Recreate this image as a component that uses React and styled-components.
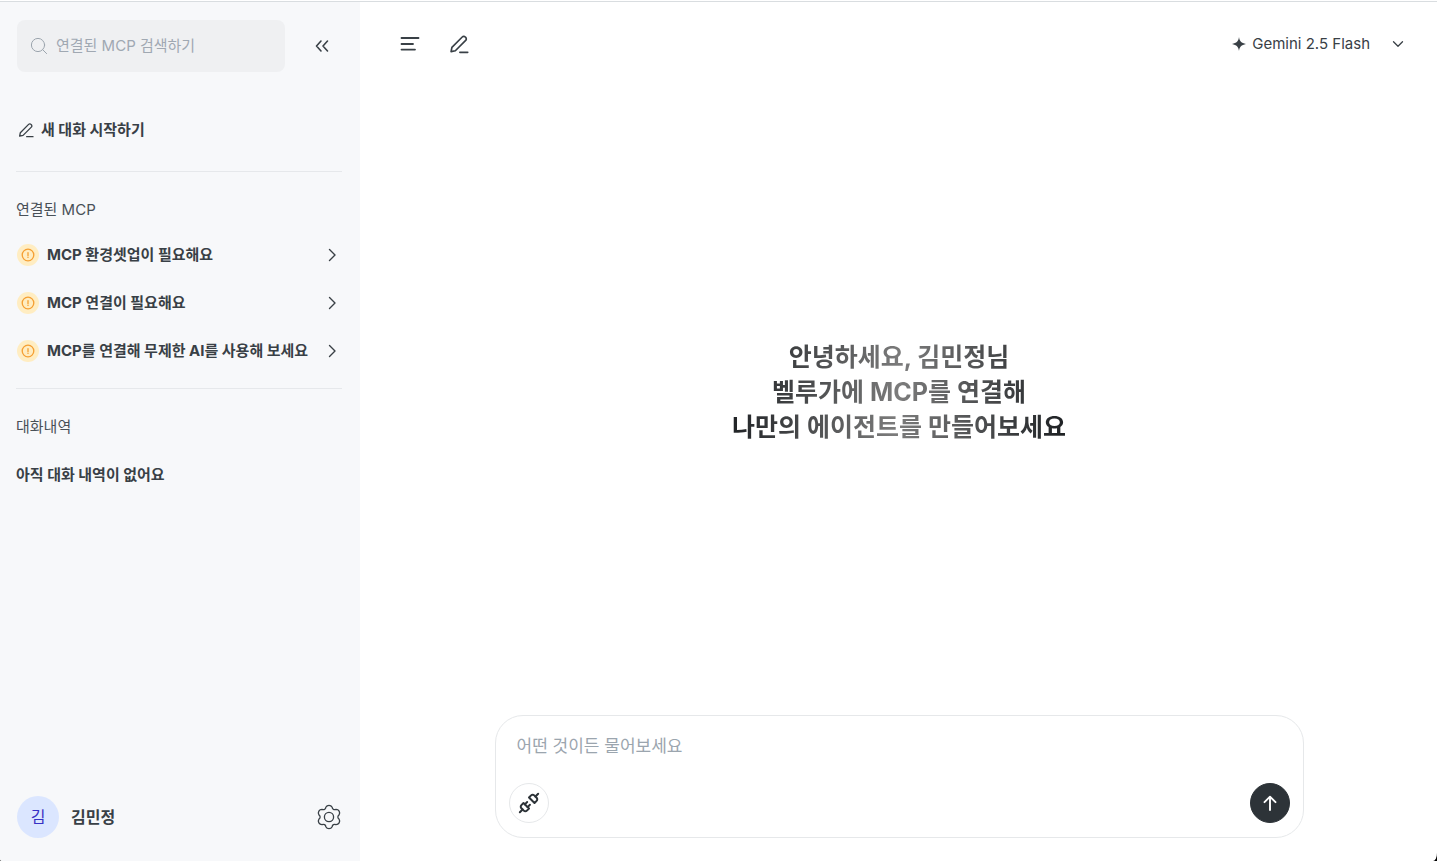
import React from 'react';
import styled, { createGlobalStyle } from 'styled-components';

const notices = [
  'MCP 환경셋업이 필요해요',
  'MCP 연결이 필요해요',
  'MCP를 연결해 무제한 AI를 사용해 보세요',
];

const PenIcon = ({ size = 24, weight = 2 }) => (
  <Icon viewBox="0 0 24 24" $size={size} $weight={weight}>
    <path d="M2.500 21.200l1-5.200L15.900 3.600a2.500 2.500 0 0 1 3.600 0l.5.5a2.500 2.500 0 0 1 0 3.600L7.600 20.100z" />
    <path d="M13 22h9.500" />
  </Icon>
);

const SearchIcon = () => (
  <Icon viewBox="0 0 18 18" $size={18} $weight={1}>
    <circle cx="8" cy="8" r="6.600" />
    <path d="M12.800 12.800L16.600 16.600" />
  </Icon>
);

const CollapseIcon = () => (
  <Icon viewBox="0 0 16 16" $size={16} $weight={1.6}>
    <path d="M7 3L2.500 8 7 13M13.500 3L9 8l4.500 5" />
  </Icon>
);

const ChevronRight = () => (
  <Icon viewBox="0 0 16 16" $size={16} $weight={1.4}>
    <path d="M5.500 2.500L11 8l-5.500 5.500" />
  </Icon>
);

const ChevronDown = () => (
  <Icon viewBox="0 0 16 16" $size={16} $weight={1.3}>
    <path d="M3.500 5.800L8 10.300l4.500-4.500" />
  </Icon>
);

const NoticeIcon = () => (
  <Icon viewBox="0 0 22 22" $size={22} $weight={1.3}>
    <circle cx="11" cy="11" r="11" fill="#ffedc2" stroke="none" />
    <circle cx="11" cy="11" r="5.800" />
    <path d="M11 8.600v3.200M11 13.300v.1" />
  </Icon>
);

const GearIcon = () => (
  <Icon viewBox="0 0 26 26" $size={26} $weight={1.3}>
    <path d="M9.820 3.200A3.600 3.600 0 0 1 16.180 3.200A2.500 2.500 0 0 0 19.890 5.350A3.600 3.600 0 0 1 23.070 10.860A2.500 2.500 0 0 0 23.070 15.140A3.600 3.600 0 0 1 19.890 20.650A2.500 2.500 0 0 0 16.180 22.800A3.600 3.600 0 0 1 9.820 22.800A2.500 2.500 0 0 0 6.110 20.650A3.600 3.600 0 0 1 2.930 15.140A2.500 2.500 0 0 0 2.930 10.860A3.600 3.600 0 0 1 6.110 5.350A2.500 2.500 0 0 0 9.820 3.200Z" />
    <circle cx="13" cy="13" r="4.600" />
  </Icon>
);

const MenuIcon = () => (
  <Icon viewBox="0 0 20 20" $size={20} $weight={1.8}>
    <path d="M1.500 4h17M1.500 10h11.500M1.500 15.600h13.500" />
  </Icon>
);

const SparkIcon = () => (
  <Icon viewBox="0 0 14 14" $size={14} $weight={0}>
    <path
      d="M7 0c.6 4.100 2.300 6 7 7-4.700 1-6.400 2.900-7 7-.6-4.100-2.300-6-7-7 4.700-1 6.400-2.900 7-7z"
      fill="currentColor"
      stroke="none"
    />
  </Icon>
);

const PlugIcon = () => (
  <Icon viewBox="0 0 24 24" $size={22} $weight={2.2}>
    <path d="m19 5 3-3M2 22l3-3M7.500 13.500 10 11M10.500 16.500 13 14" />
    <path d="M6.300 20.300a2.400 2.400 0 0 0 3.400 0L12 18l-6-6-2.300 2.300a2.400 2.400 0 0 0 0 3.400Z" />
    <path d="m12 6 6 6 2.300-2.300a2.400 2.400 0 0 0 0-3.400l-2.600-2.600a2.400 2.400 0 0 0-3.400 0Z" />
  </Icon>
);

const ArrowUpIcon = () => (
  <Icon viewBox="0 0 18 18" $size={18} $weight={1.9}>
    <path d="M9 16V3M3.500 8.200L9 2.700l5.500 5.500" />
  </Icon>
);

export default function App() {
  return (
    <>
      <GlobalStyle />
      <Page>
        <Sidebar>
          <SearchRow>
            <SearchBox>
              <SearchIcon />
              <SearchInput type="search" placeholder="연결된 MCP 검색하기" aria-label="연결된 MCP 검색하기" />
            </SearchBox>
            <IconButton type="button" aria-label="사이드바 접기">
              <CollapseIcon />
            </IconButton>
          </SearchRow>

          <NewChat type="button">
            <PenIcon size={16} />
            새 대화 시작하기
          </NewChat>

          <Section>
            <SectionTitle>연결된 MCP</SectionTitle>
            <NoticeList>
              {notices.map((text) => (
                <li key={text}>
                  <NoticeButton type="button">
                    <NoticeMark>
                      <NoticeIcon />
                    </NoticeMark>
                    <NoticeText>{text}</NoticeText>
                    <ChevronRight />
                  </NoticeButton>
                </li>
              ))}
            </NoticeList>
          </Section>

          <Section>
            <SectionTitle>대화내역</SectionTitle>
            <Empty>아직 대화 내역이 없어요</Empty>
          </Section>

          <Profile>
            <Avatar>김</Avatar>
            <ProfileName>김민정</ProfileName>
            <IconButton type="button" aria-label="설정">
              <GearIcon />
            </IconButton>
          </Profile>
        </Sidebar>

        <Main>
          <Header>
            <HeaderTools>
              <IconButton type="button" aria-label="메뉴">
                <MenuIcon />
              </IconButton>
              <IconButton type="button" aria-label="새 대화">
                <PenIcon size={20} />
              </IconButton>
            </HeaderTools>
            <ModelButton type="button">
              <SparkIcon />
              <ModelName>Gemini 2.5 Flash</ModelName>
              <ChevronDown />
            </ModelButton>
          </Header>

          <Welcome>
            <Greeting>
              안녕하세요, 김민정님
              <br />
              벨루가에 MCP를 연결해
              <br />
              나만의 에이전트를 만들어보세요
            </Greeting>
          </Welcome>

          <Composer onSubmit={(e) => e.preventDefault()}>
            <Prompt rows={1} placeholder="어떤 것이든 물어보세요" aria-label="메시지" />
            <ComposerActions>
              <RoundButton type="button" aria-label="MCP 연결">
                <PlugIcon />
              </RoundButton>
              <RoundButton type="submit" $dark aria-label="보내기">
                <ArrowUpIcon />
              </RoundButton>
            </ComposerActions>
          </Composer>
        </Main>
      </Page>
    </>
  );
}

const GlobalStyle = createGlobalStyle`
  * {
    box-sizing: border-box;
  }

  html {
    background: #000;
  }

  body {
    margin: 0;
    color: #394046;
    font-family: Inter, "Noto Sans CJK KR", sans-serif;
    font-size: 15px;
    line-height: 24px;
  }

  button, input, textarea {
    font: inherit;
    color: inherit;
    padding: 0;
    border: 0;
    background: none;
  }

  button {
    cursor: pointer;
  }
`;

const Icon = styled.svg.attrs({ 'aria-hidden': true })`
  display: block;
  flex: none;
  width: ${(p) => p.$size}px;
  height: ${(p) => p.$size}px;
  fill: none;
  stroke: currentColor;
  stroke-width: ${(p) => p.$weight};
  stroke-linecap: round;
  stroke-linejoin: round;
`;

const Page = styled.div`
  display: flex;
  min-height: 100vh;
  padding-top: 1px;
  background: #fff;
  border-radius: 0 0 4px 2px / 0 0 8px 2px;
  overflow: hidden;
`;

const Sidebar = styled.aside`
  display: flex;
  flex-direction: column;
  flex: none;
  width: 360px;
  padding: 18px 18px 23px 16px;
  background: #f7f8fa;
  border-top: 1px solid #d9dde0;
`;

const SearchRow = styled.div`
  display: flex;
  align-items: center;
  gap: 29px;
  padding-left: 1px;
`;

const SearchBox = styled.label`
  display: flex;
  align-items: center;
  gap: 8px;
  width: 268px;
  height: 52px;
  padding: 0 13px;
  border-radius: 8px;
  background: #eff0f2;
  color: #9ca5ae;
`;

const SearchInput = styled.input`
  flex: 1;
  min-width: 0;
  outline: none;

  &::placeholder {
    color: #a0a8b2;
    opacity: 1;
  }
`;

const IconButton = styled.button`
  display: flex;
  align-items: center;
  justify-content: center;
`;

const NewChat = styled.button`
  display: flex;
  align-items: center;
  gap: 7px;
  margin: 46px 0 29px;
  padding-left: 2px;
  font-weight: 700;
`;

const Section = styled.section`
  padding: 26px 0 13px;
  border-top: 1px solid #e6e8eb;
`;

const SectionTitle = styled.h2`
  margin: 0;
  font-size: 15px;
  font-weight: 400;
  color: #495057;
`;

const NoticeList = styled.ul`
  margin: 9px 0 0;
  padding: 0;
  list-style: none;
`;

const NoticeButton = styled.button`
  display: flex;
  align-items: center;
  width: 100%;
  height: 48px;
  padding: 0 2px 0 1px;
  text-align: left;
`;

const NoticeMark = styled.span`
  color: #f59f32;
`;

const NoticeText = styled.span`
  flex: 1;
  margin-left: 8px;
  font-weight: 700;
  white-space: nowrap;
`;

const Empty = styled.p`
  margin: 24px 0 0;
  font-weight: 700;
`;

const Profile = styled.div`
  display: flex;
  align-items: center;
  gap: 12px;
  margin-top: auto;
  padding-left: 1px;

  button {
    margin-left: auto;
  }
`;

const Avatar = styled.span`
  display: flex;
  align-items: center;
  justify-content: center;
  width: 42px;
  height: 42px;
  border-radius: 50%;
  background: #dbe6ff;
  color: #3730c4;
  font-size: 16px;
`;

const ProfileName = styled.span`
  font-size: 16px;
  font-weight: 700;
`;

const Main = styled.main`
  display: flex;
  flex-direction: column;
  flex: 1;
  min-width: 0;
  padding: 0 31px 23px 32px;
  border-top: 1px solid #d9dde0;
`;

const Header = styled.header`
  display: flex;
  align-items: center;
  justify-content: space-between;
  height: 84px;
  padding-left: 8px;
`;

const HeaderTools = styled.div`
  display: flex;
  gap: 29px;
`;

const ModelButton = styled.button`
  display: flex;
  align-items: center;
  gap: 6px;
`;

const ModelName = styled.span`
  margin-right: 14px;
`;

const Welcome = styled.div`
  display: flex;
  flex: 1;
  align-items: center;
  justify-content: center;
  padding-bottom: 16px;
`;

const Greeting = styled.h1`
  margin: 0;
  background: linear-gradient(95deg, #1c1f22 0%, #7c7c7c 50%, #1c1f22 100%);
  background-clip: text;
  color: transparent;
  font-size: 25px;
  font-weight: 700;
  line-height: 35px;
  text-align: center;
`;

const Composer = styled.form`
  display: flex;
  flex-direction: column;
  justify-content: space-between;
  align-self: center;
  width: 100%;
  max-width: 809px;
  min-height: 123px;
  padding: 18px 13px 14px;
  border: 1px solid #e6e8ea;
  border-radius: 28px;
`;

const Prompt = styled.textarea`
  display: block;
  width: 100%;
  padding: 0 8px;
  font-size: 17px;
  outline: none;
  resize: none;

  &::placeholder {
    color: #9ba5ae;
    opacity: 1;
  }
`;

const ComposerActions = styled.div`
  display: flex;
  align-items: center;
  justify-content: space-between;
`;

const RoundButton = styled.button`
  display: flex;
  align-items: center;
  justify-content: center;
  width: 40px;
  height: 40px;
  border: 1px solid ${(p) => (p.$dark ? '#2d3338' : '#e6e8ea')};
  border-radius: 50%;
  background: ${(p) => (p.$dark ? '#2d3338' : '#fff')};
  color: ${(p) => (p.$dark ? '#fff' : '#2d3338')};
`;
